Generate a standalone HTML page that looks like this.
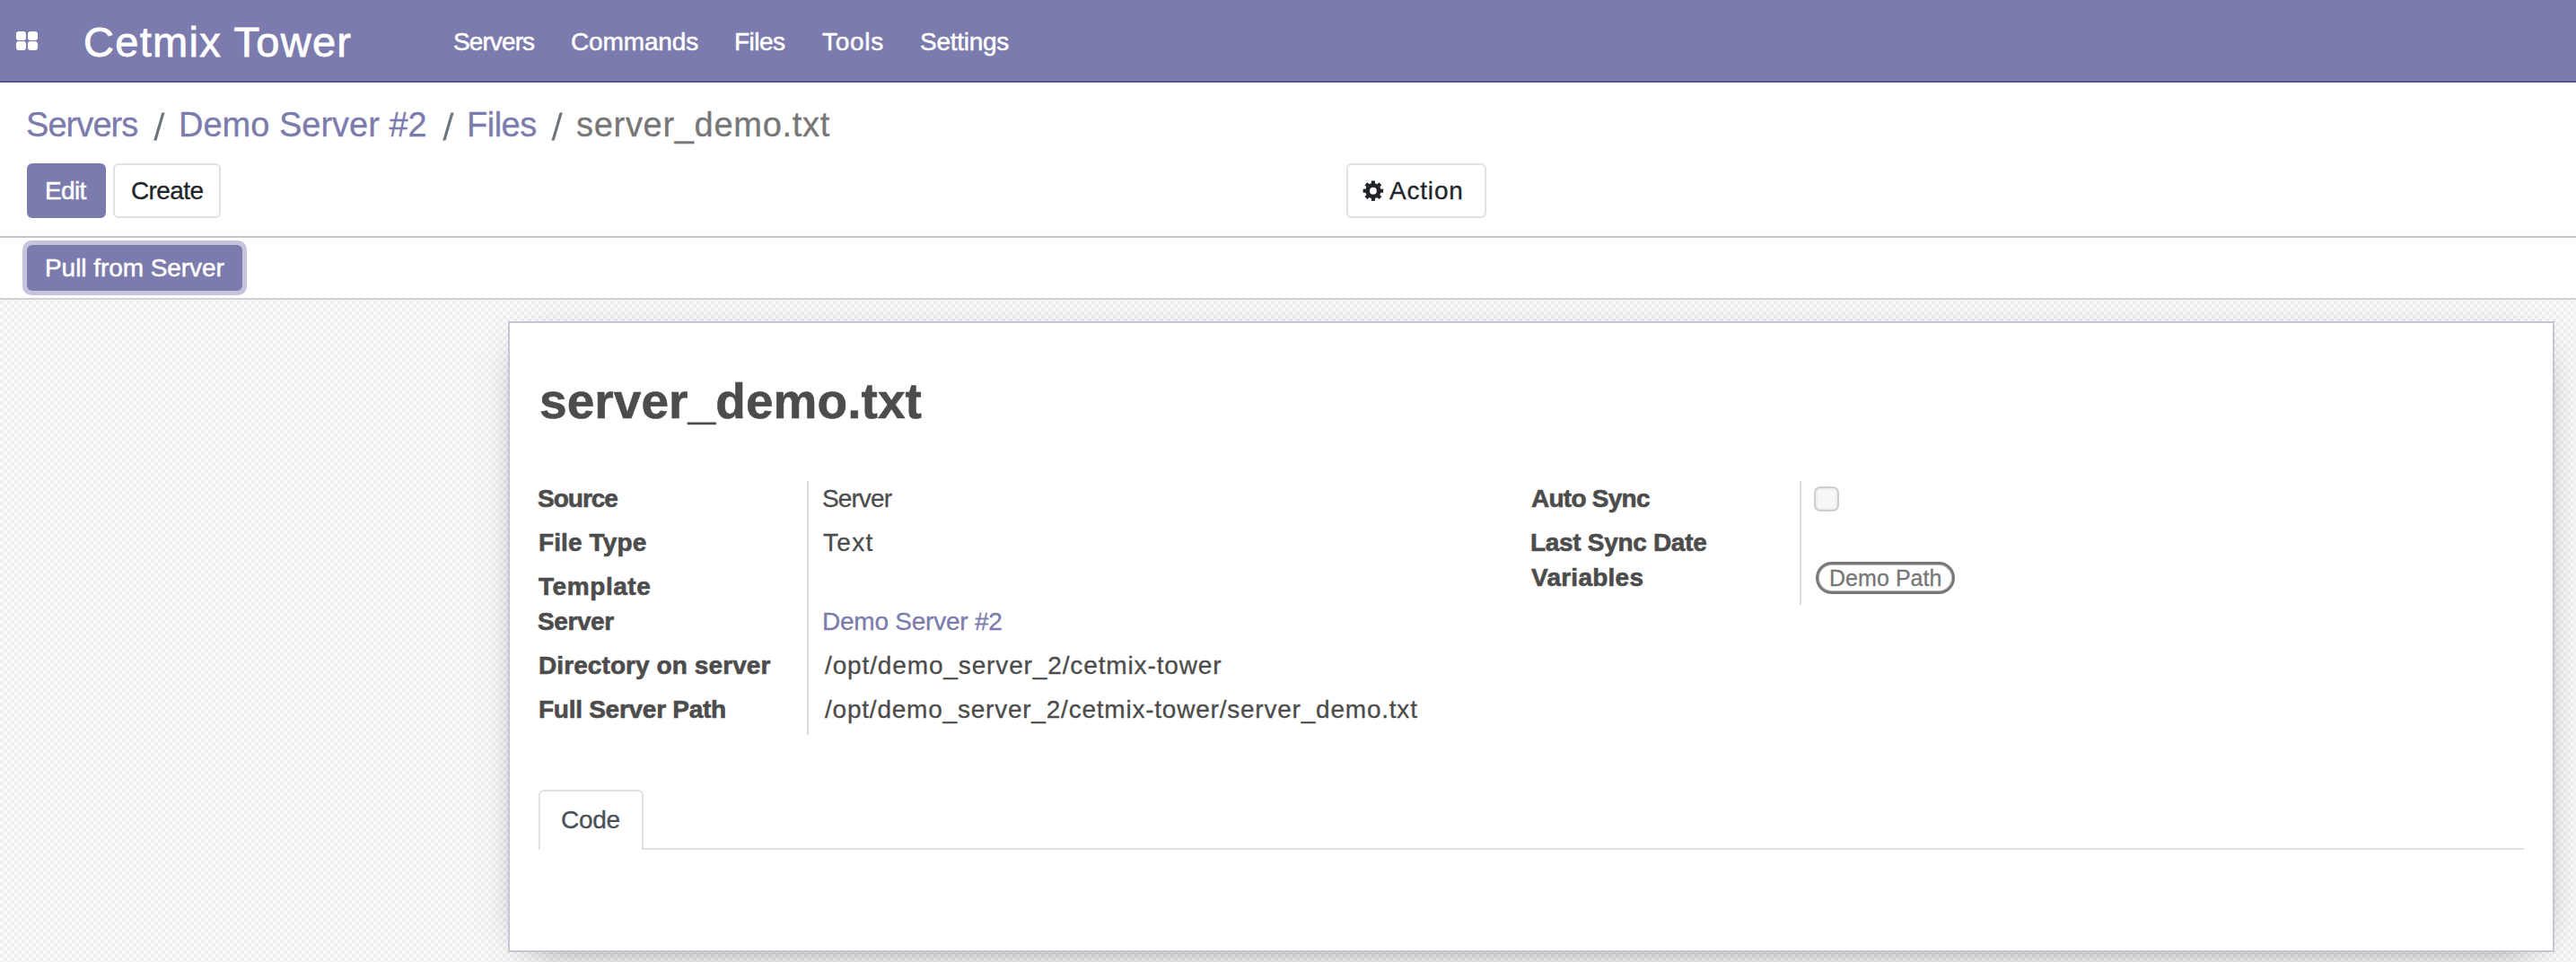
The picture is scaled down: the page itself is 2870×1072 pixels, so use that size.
<!DOCTYPE html>
<html>
<head>
<meta charset="utf-8">
<style>
html,body{margin:0;padding:0;}
body{width:2870px;height:1072px;overflow:hidden;position:relative;background:#fff;font-family:"Liberation Sans",sans-serif;}
.t{position:absolute;line-height:1;white-space:pre;}
#nav{position:absolute;left:0;top:0;width:2870px;height:90px;background:#7C7BAD;border-bottom:2px solid #55538a;}
.apps{position:absolute;width:11px;height:10px;background:#fff;border-radius:3px;}
.nav-t{color:#fff;font-size:28px;}
#cp{position:absolute;left:0;top:92px;width:2870px;height:171px;background:#fff;border-bottom:2px solid #c6c6c6;}
#sb{position:absolute;left:0;top:265px;width:2870px;height:67px;background:#fff;border-bottom:2px solid #cdd1d8;}
#bg{position:absolute;left:0;top:334px;width:2870px;height:738px;
  background-color:#fbfbfb;
  background-image:conic-gradient(#fbfbfb 0 25%, #eeeeee 0 50%, #fbfbfb 0 75%, #eeeeee 0);
  background-size:8px 8px;background-position:0 1px;}
.btn{position:absolute;box-sizing:border-box;border-radius:6px;}
#sheet{position:absolute;left:566px;top:358px;width:2280px;height:703px;box-sizing:border-box;background:#fff;border:2px solid #c6c6d2;box-shadow:0 10px 44px -26px rgba(0,0,0,.75);}
.lbl{font-weight:700;color:#4c4c4c;font-size:28px;}
.val{color:#4c4c4c;font-size:28px;}
.vsep{position:absolute;width:2px;background:#dcdcdc;}
</style>
</head>
<body>
<div id="nav">
  <div class="apps" style="left:18px;top:35px"></div>
  <div class="apps" style="left:31px;top:35px"></div>
  <div class="apps" style="left:18px;top:46px"></div>
  <div class="apps" style="left:31px;top:46px"></div>

</div>

<div id="cp">
</div>

<div class="btn" style="left:30px;top:182px;width:88px;height:61px;background:#7C7BAD;"></div>
<div class="btn" style="left:126px;top:182px;width:120px;height:61px;background:#fff;border:2px solid #dee2e6;"></div>

<div class="btn" style="left:1500px;top:182px;width:156px;height:61px;background:#fff;border:2px solid #dee2e6;"></div>
<svg style="position:absolute;left:0;top:0;overflow:visible" width="1" height="1"><g transform="translate(1529.9,212.65)" fill="#212529"><circle r="8.7"/><rect x="-2.05" y="-11.25" width="4.1" height="5" transform="rotate(0)"/><rect x="-2.05" y="-11.25" width="4.1" height="5" transform="rotate(45)"/><rect x="-2.05" y="-11.25" width="4.1" height="5" transform="rotate(90)"/><rect x="-2.05" y="-11.25" width="4.1" height="5" transform="rotate(135)"/><rect x="-2.05" y="-11.25" width="4.1" height="5" transform="rotate(180)"/><rect x="-2.05" y="-11.25" width="4.1" height="5" transform="rotate(225)"/><rect x="-2.05" y="-11.25" width="4.1" height="5" transform="rotate(270)"/><rect x="-2.05" y="-11.25" width="4.1" height="5" transform="rotate(315)"/><circle r="3.9" fill="#fff"/></g></svg>

<div id="sb"></div>
<div class="btn" style="left:25px;top:268px;width:250px;height:61px;background:#c5c4dc;border-radius:10px;"></div>
<div class="btn" style="left:30px;top:273px;width:240px;height:51px;background:#7C7BAD;border-radius:6px;"></div>

<div id="bg"></div>
<div id="sheet"></div>


<div class="vsep" style="left:899px;top:536px;height:283px;"></div>


<div class="vsep" style="left:2005px;top:536px;height:138px;"></div>
<div style="position:absolute;left:2021px;top:542px;width:28px;height:28px;box-sizing:border-box;border:2px solid #cdcdcd;border-radius:7px;background:#f7f7f6;box-shadow:inset 0 0 0 2px #eceef0;"></div>
<div style="position:absolute;left:2023px;top:626px;width:155px;height:36px;box-sizing:border-box;border:3px solid #777;border-radius:18px;box-shadow:inset 0 0 0 1px rgba(119,119,119,.55);"></div>

<div style="position:absolute;left:600px;top:880px;width:117px;height:67px;box-sizing:border-box;border:2px solid #dee2e6;border-bottom:none;border-radius:6px 6px 0 0;background:#fff;"></div>
<div style="position:absolute;left:717px;top:945px;width:2095px;height:2px;background:#dee2e6;"></div>
<svg style="position:absolute;left:0;top:0;overflow:visible" width="1" height="1">
<polygon fill="#6c757d" points="180.3,125.4 183.6,125.4 174.5,156.6 171.2,156.6"/>
<polygon fill="#6c757d" points="502.3,125.4 505.6,125.4 496.5,156.6 493.2,156.6"/>
<polygon fill="#6c757d" points="623.5,125.4 626.8,125.4 617.7,156.6 614.4,156.6"/>
</svg>
<div class="t" id="t0" style="left:93px;top:23px;font-size:47.0px;color:#fff;letter-spacing:1.29px;-webkit-text-stroke:0.8px #fff;">Cetmix Tower</div>
<div class="t" id="t1" style="left:505px;top:33px;font-size:28.0px;color:#fff;letter-spacing:-0.90px;-webkit-text-stroke:0.5px #fff;">Servers</div>
<div class="t" id="t2" style="left:636px;top:33px;font-size:28.0px;color:#fff;letter-spacing:-0.14px;-webkit-text-stroke:0.5px #fff;">Commands</div>
<div class="t" id="t3" style="left:818px;top:33px;font-size:28.0px;color:#fff;letter-spacing:-0.50px;-webkit-text-stroke:0.5px #fff;">Files</div>
<div class="t" id="t4" style="left:916px;top:33px;font-size:28.0px;color:#fff;letter-spacing:0.70px;-webkit-text-stroke:0.5px #fff;">Tools</div>
<div class="t" id="t5" style="left:1025px;top:33px;font-size:28.0px;color:#fff;letter-spacing:-0.28px;-webkit-text-stroke:0.5px #fff;">Settings</div>
<div class="t" id="t6" style="left:29px;top:120px;font-size:38.0px;color:#7C7BAD;letter-spacing:-0.93px;-webkit-text-stroke:0.3px #7C7BAD;">Servers</div>
<div class="t" id="t8" style="left:199px;top:120px;font-size:38.0px;color:#7C7BAD;-webkit-text-stroke:0.3px #7C7BAD;">Demo Server #2</div>
<div class="t" id="t10" style="left:520px;top:120px;font-size:38.0px;color:#7C7BAD;letter-spacing:-0.50px;-webkit-text-stroke:0.3px #7C7BAD;">Files</div>
<div class="t" id="t12" style="left:642px;top:120px;font-size:38.0px;color:#777777;letter-spacing:0.70px;-webkit-text-stroke:0.3px #777777;">server_demo.txt</div>
<div class="t" id="t13" style="left:50px;top:199px;font-size:28.0px;color:#fff;letter-spacing:-0.66px;-webkit-text-stroke:0.5px #fff;">Edit</div>
<div class="t" id="t14" style="left:146px;top:199px;font-size:28.0px;color:#212529;letter-spacing:-0.60px;-webkit-text-stroke:0.3px #212529;">Create</div>
<div class="t" id="t15" style="left:1548px;top:199px;font-size:28.0px;color:#212529;letter-spacing:0.80px;-webkit-text-stroke:0.3px #212529;">Action</div>
<div class="t" id="t16" style="left:50px;top:285px;font-size:28.0px;color:#fff;letter-spacing:-0.06px;-webkit-text-stroke:0.5px #fff;">Pull from Server</div>
<div class="t" id="t17" style="left:601px;top:420px;font-size:55.0px;color:#4c4c4c;font-weight:700;letter-spacing:0.07px;-webkit-text-stroke:0.6px #4c4c4c;">server_demo.txt</div>
<div class="t" id="t18" style="left:599px;top:542px;font-size:28.0px;color:#4c4c4c;font-weight:700;letter-spacing:-1.00px;-webkit-text-stroke:0.6px #4c4c4c;">Source</div>
<div class="t" id="t19" style="left:600px;top:591px;font-size:28.0px;color:#4c4c4c;font-weight:700;letter-spacing:0.12px;-webkit-text-stroke:0.6px #4c4c4c;">File Type</div>
<div class="t" id="t20" style="left:600px;top:640px;font-size:28.0px;color:#4c4c4c;font-weight:700;letter-spacing:0.57px;-webkit-text-stroke:0.6px #4c4c4c;">Template</div>
<div class="t" id="t21" style="left:599px;top:679px;font-size:28.0px;color:#4c4c4c;font-weight:700;letter-spacing:-0.40px;-webkit-text-stroke:0.6px #4c4c4c;">Server</div>
<div class="t" id="t22" style="left:600px;top:728px;font-size:28.0px;color:#4c4c4c;font-weight:700;letter-spacing:0.09px;-webkit-text-stroke:0.6px #4c4c4c;">Directory on server</div>
<div class="t" id="t23" style="left:600px;top:777px;font-size:28.0px;color:#4c4c4c;font-weight:700;letter-spacing:-0.27px;-webkit-text-stroke:0.6px #4c4c4c;">Full Server Path</div>
<div class="t" id="t24" style="left:916px;top:542px;font-size:28.0px;color:#4c4c4c;letter-spacing:-0.90px;-webkit-text-stroke:0.3px #4c4c4c;">Server</div>
<div class="t" id="t25" style="left:917px;top:591px;font-size:28.0px;color:#4c4c4c;letter-spacing:1.33px;-webkit-text-stroke:0.3px #4c4c4c;">Text</div>
<div class="t" id="t26" style="left:916px;top:679px;font-size:28.0px;color:#7C7BAD;letter-spacing:-0.23px;-webkit-text-stroke:0.3px #7C7BAD;">Demo Server #2</div>
<div class="t" id="t27" style="left:919px;top:728px;font-size:28.0px;color:#4c4c4c;letter-spacing:0.87px;-webkit-text-stroke:0.3px #4c4c4c;">/opt/demo_server_2/cetmix-tower</div>
<div class="t" id="t28" style="left:919px;top:777px;font-size:28.0px;color:#4c4c4c;letter-spacing:0.78px;-webkit-text-stroke:0.3px #4c4c4c;">/opt/demo_server_2/cetmix-tower/server_demo.txt</div>
<div class="t" id="t29" style="left:1706px;top:542px;font-size:28.0px;color:#4c4c4c;font-weight:700;letter-spacing:-0.74px;-webkit-text-stroke:0.6px #4c4c4c;">Auto Sync</div>
<div class="t" id="t30" style="left:1705px;top:591px;font-size:28.0px;color:#4c4c4c;font-weight:700;letter-spacing:-0.31px;-webkit-text-stroke:0.6px #4c4c4c;">Last Sync Date</div>
<div class="t" id="t31" style="left:1706px;top:630px;font-size:28.0px;color:#4c4c4c;font-weight:700;letter-spacing:0.25px;-webkit-text-stroke:0.6px #4c4c4c;">Variables</div>
<div class="t" id="t32" style="left:2038px;top:632px;font-size:25px;color:#777;letter-spacing:0.05px;-webkit-text-stroke:0.3px #777;">Demo Path</div>
<div class="t" id="t33" style="left:625px;top:900px;font-size:28.0px;color:#495057;letter-spacing:-0.33px;-webkit-text-stroke:0.3px #495057;">Code</div>
</body>
</html>
